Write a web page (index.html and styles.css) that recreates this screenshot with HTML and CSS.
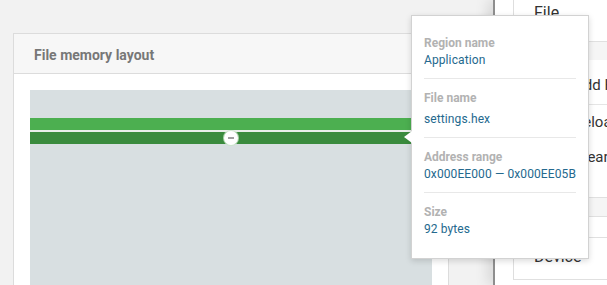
FILE: index.html
```html
<!DOCTYPE html>
<html>
<head>
<meta charset="utf-8">
<link rel="stylesheet" href="styles.css">
</head>
<body>
<div class="main">
  <div class="card">
    <div class="card-head">File memory layout</div>
    <div class="card-body">
      <div class="memory">
        <div class="bar bar-light"></div>
        <div class="bar bar-dark"></div>
        <div class="handle"><span class="minus"></span></div>
      </div>
    </div>
  </div>
</div>
<div class="sidebar">
  <div class="panel panel-file">
    <div class="panel-head">File</div>
    <div class="panel-band"></div>
    <div class="item item-first">Add HEX file</div>
    <div class="item">Reload files</div>
    <div class="item">Clear files</div>
  </div>
  <div class="gap-band"></div>
  <div class="panel panel-device">
    <div class="panel-head device-head">Device</div>
  </div>
</div>
<div class="tooltip">
  <div class="tt-label">Region name</div>
  <div class="tt-value">Application</div>
  <div class="tt-sep"></div>
  <div class="tt-label">File name</div>
  <div class="tt-value tt-file">settings.hex</div>
  <div class="tt-sep"></div>
  <div class="tt-label">Address range</div>
  <div class="tt-value">0x000EE000 — 0x000EE05B</div>
  <div class="tt-sep"></div>
  <div class="tt-label">Size</div>
  <div class="tt-value">92 bytes</div>
</div>
</body>
</html>
```
FILE: styles.css
```css
* { box-sizing: border-box; }
html, body {
  margin: 0;
  height: 285px;
  overflow: hidden;
}
body {
  display: flex;
  background: #f2f2f2;
  font-family: Roboto, "Liberation Sans", sans-serif;
  position: relative;
}
.main {
  flex: 0 0 493px;
  padding: 33px 0 0 13px;
}
.card {
  width: 436px;
  border: 1px solid #dcdcdc;
  background: #fff;
}
.card-head {
  height: 40px;
  border-bottom: 1px solid #dcdcdc;
  background: #f7f7f7;
  padding: 2px 0 0 20px;
  display: flex;
  align-items: center;
  font-size: 14px;
  font-weight: 700;
  color: #777;
}
.card-body {
  padding: 16px 16px 0 16px;
}
.memory {
  position: relative;
  height: 260px;
  background: #d8dfe1;
  padding-top: 28px;
}
.bar { height: 12px; }
.bar-light { background: #4caf50; }
.bar-dark { background: #3a8b3d; margin-top: 2px; }
.memory .bar-light { box-shadow: 0 2px 0 #e9eee9; }
.handle {
  position: absolute;
  left: 194px;
  top: 41px;
  width: 14px;
  height: 14px;
  border-radius: 50%;
  background: #fff;
  box-shadow: 0 0 0 1px rgba(200, 230, 200, 0.8);
  display: flex;
  align-items: center;
  justify-content: center;
}
.minus {
  width: 6px;
  height: 2px;
  background: #a0a0a0;
}
.sidebar {
  flex: 1;
  min-width: 0;
  overflow: hidden;
  background: #fff;
  border-left: 2px solid #8e8e8e;
  box-shadow: -6px 0 12px rgba(0, 0, 0, 0.10);
  padding-left: 18px;
}
.panel {
  border-left: 1px solid #dedede;
  color: #333;
}
.panel-head {
  height: 42px;
  border-bottom: 1px solid #e0e0e0;
  padding: 3px 0 0 20px;
  font-size: 16px;
  line-height: 20px;
}
.panel-band {
  height: 18px;
  background: #f5f5f5;
}
.item {
  height: 35px;
  line-height: 35px;
  padding-left: 60px;
  font-size: 15px;
  white-space: nowrap;
}
.item-first {
  height: 45px;
  padding-top: 6px;
  line-height: 39px;
  border-bottom: 1px solid #e5e5e5;
}
.panel-file {
  height: 198px;
  border-bottom: 1px solid #e0e0e0;
}
.gap-band {
  height: 19px;
  background: #f5f5f5;
  border-bottom: 1px solid #e0e0e0;
}
.panel-device {
  margin-top: 20px;
  border-top: 1px solid #e0e0e0;
}
.device-head {
  padding-top: 9px;
  font-size: 16px;
}
.tooltip {
  position: absolute;
  left: 411px;
  top: 15px;
  width: 178px;
  background: #fff;
  border: 1px solid #d2d2d2;
  box-shadow: 0 2px 6px rgba(0, 0, 0, 0.15);
  padding: 19px 12px 21px 12px;
  font-size: 12px;
  line-height: 16px;
  z-index: 5;
}
.tooltip::before {
  content: "";
  position: absolute;
  left: -8px;
  top: 115px;
  border-top: 6px solid transparent;
  border-bottom: 6px solid transparent;
  border-right: 8px solid #fff;
}
.tt-label {
  color: #b2b2b2;
  font-weight: 700;
}
.tt-value {
  color: #24698e;
  margin-top: 1px;
  white-space: nowrap;
  letter-spacing: 0.1px;
}
.tt-file { margin-top: 5px; }
.tt-sep {
  height: 1px;
  background: #e8e8e8;
  margin: 10px 0 11px 0;
}
```
